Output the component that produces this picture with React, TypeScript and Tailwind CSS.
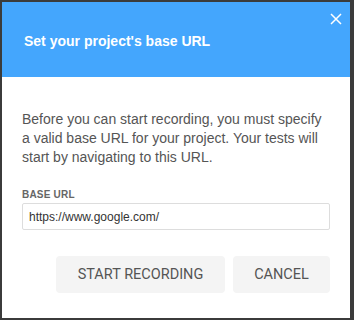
export default function App() {
  return (
    <div className="w-[354px] h-[320px] bg-[#3b3b3b] p-[2px] font-['Liberation_Sans',Arial,sans-serif]">
      <div className="w-[348px] h-[316px] bg-white flex flex-col">
        <div className="relative h-[75px] bg-[#44a6fd] flex items-center px-[22px]">
          <h1 className="text-[14px] font-bold text-white leading-none mt-[3px]">Set your project's base URL</h1>
          <button className="absolute right-[7px] top-[10px] w-[14px] h-[14px] flex items-center justify-center">
            <svg width="12" height="12" viewBox="0 0 12 12" fill="none" stroke="white" strokeWidth="1.5">
              <path d="M1 1L11 11M11 1L1 11" />
            </svg>
          </button>
        </div>
        <div className="px-[20px] pt-[33px] flex flex-col">
          <p className="text-[14px] leading-[19px] text-[#555]">
            Before you can start recording, you must specify a valid base URL for your project. Your tests will start by navigating to this URL.
          </p>
          <label className="mt-[22px] text-[10px] leading-[12px] font-bold tracking-[0.2px] text-[#666]">BASE URL</label>
          <input
            readOnly
            value="https://www.google.com/"
            className="mt-[2px] h-[27px] w-[308px] border border-[#ddd] rounded-[2px] px-[6px] text-[12px] text-[#333] outline-none font-['Liberation_Sans',Arial,sans-serif]"
          />
          <div className="mt-[26px] flex justify-end gap-[8px] font-['Roboto',sans-serif]">
            <button className="w-[169px] h-[37px] bg-[#f4f4f4] rounded-[4px] text-[14.5px] text-[#555]">START RECORDING</button>
            <button className="w-[97px] h-[37px] bg-[#f4f4f4] rounded-[4px] text-[14.5px] text-[#555]">CANCEL</button>
          </div>
        </div>
      </div>
    </div>
  );
}
